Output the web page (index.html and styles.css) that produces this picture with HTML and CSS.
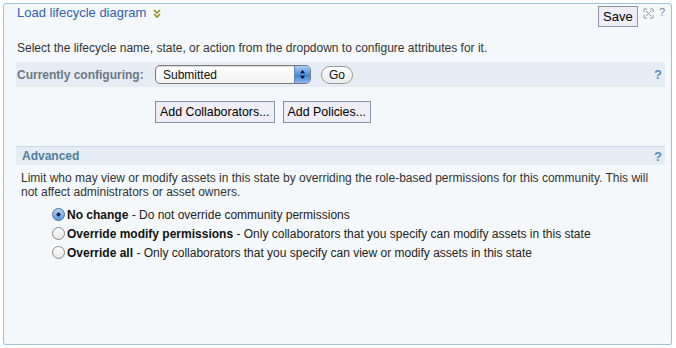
FILE: index.html
```html
<!DOCTYPE html>
<html>
<head>
<meta charset="utf-8">
<link rel="stylesheet" href="styles.css">
</head>
<body>
<div class="panel">
  <div class="header">
    <a class="title">Load lifecycle diagram</a>
    <svg class="chev" width="8" height="10" viewBox="0 0 8 10"><path d="M1 1 L4 4 L7 1 M1 5 L4 8 L7 5" fill="none" stroke="#8f8f1e" stroke-width="1.6"/></svg>
    <span class="spacer"></span>
    <button class="save">Save</button>
    <svg class="xicon" width="11" height="11" viewBox="0 0 11 11"><path d="M1 1 L4 1 M1 1 L1 4 M10 1 L7 1 M10 1 L10 4 M1 10 L4 10 M1 10 L1 7 M10 10 L7 10 M10 10 L10 7 M3 3 L8 8 M8 3 L3 8" fill="none" stroke="#8a8a8a" stroke-width="0.9"/></svg>
    <span class="qicon">?</span>
  </div>
  <p class="desc">Select the lifecycle name, state, or action from the dropdown to configure attributes for it.</p>
  <div class="bar config">
    <span class="label">Currently configuring:</span>
    <div class="select">
      <span class="seltext">Submitted</span>
      <span class="arrows"><svg width="7" height="11" viewBox="0 0 7 11"><path d="M3.5 1 L6 4.2 L1 4.2 Z M3.5 10 L6 6.8 L1 6.8 Z" fill="#111"/></svg></span>
    </div>
    <button class="go">Go</button>
    <span class="spacer"></span>
    <span class="help">?</span>
  </div>
  <div class="actions">
    <button class="btn">Add Collaborators...</button>
    <button class="btn">Add Policies...</button>
  </div>
  <div class="bar adv">
    <span class="advlabel">Advanced</span>
    <span class="spacer"></span>
    <span class="help">?</span>
  </div>
  <p class="para">Limit who may view or modify assets in this state by overriding the role-based permissions for this community. This will not affect administrators or asset owners.</p>
  <div class="radios">
    <div class="radio"><span class="circle on"></span><b>No change</b>&nbsp;- Do not override community permissions</div>
    <div class="radio"><span class="circle"></span><b>Override modify permissions</b>&nbsp;- Only collaborators that you specify can modify assets in this state</div>
    <div class="radio"><span class="circle"></span><b>Override all</b>&nbsp;- Only collaborators that you specify can view or modify assets in this state</div>
  </div>
</div>
</body>
</html>
```

FILE: styles.css
```css
html, body {
  margin: 0;
  padding: 0;
  background: #ffffff;
}
body {
  padding: 3px 0 0 3px;
  font-family: "Liberation Sans", Arial, sans-serif;
  font-size: 12px;
  color: #333333;
}
.panel {
  width: 667px;
  height: 340px;
  border: 1px solid #9cc2d7;
  border-radius: 3px;
  background: #f5f8fa;
  box-shadow: 0 1px 0 #cfe0ea;
  display: flex;
  flex-direction: column;
}
.header {
  display: flex;
  align-items: flex-start;
  height: 24px;
  padding: 0 6px 0 13px;
}
.title {
  font-size: 13px;
  line-height: 16px;
  color: #2f63b3;
  margin-top: 1px;
}
.chev {
  margin: 5px 0 0 7px;
}
.spacer {
  flex: 1;
}
.save {
  font-family: "Liberation Sans", Arial, sans-serif;
  font-size: 13px;
  height: 21px;
  width: 40px;
  padding: 0;
  margin-top: 2px;
  border: 1px solid #8c98a6;
  background: #eeedf6;
  color: #000;
}
.xicon {
  margin: 4px 0 0 5px;
}
.qicon {
  font-size: 11px;
  color: #8a8a8a;
  margin: 2px 0 0 5px;
  line-height: 12px;
}
.desc {
  margin: 13px 0 0 13px;
  line-height: 14px;
}
.bar {
  display: flex;
  align-items: center;
  margin: 0 6px 0 12px;
  background: #e5ecf3;
}
.config {
  margin-top: 7px;
  height: 25px;
  padding-left: 1px;
}
.label {
  font-weight: bold;
  color: #6c7986;
  width: 138px;
}
.select {
  display: flex;
  align-items: center;
  width: 154px;
  height: 17px;
  border: 1px solid #7c7c7c;
  border-radius: 5px;
  background: linear-gradient(#ffffff, #f2f2f2);
  overflow: hidden;
  box-shadow: inset 0 1px 1px rgba(0,0,0,0.15);
}
.seltext {
  flex: 1;
  padding-left: 7px;
  font-size: 12px;
  color: #111;
}
.arrows {
  width: 15px;
  height: 17px;
  display: flex;
  align-items: center;
  justify-content: center;
  background: linear-gradient(#a9cbf3, #4f8ee0 50%, #3b7fd8 51%, #8ab8ee);
  border-left: 1px solid #5b86b8;
}
.go {
  margin-left: 10px;
  height: 18px;
  width: 32px;
  padding: 0;
  border: 1px solid #9a9a9a;
  border-radius: 9px;
  background: linear-gradient(#ffffff, #ececec);
  font-family: "Liberation Sans", Arial, sans-serif;
  font-size: 12px;
  color: #111;
}
.help {
  font-weight: bold;
  font-size: 13px;
  color: #5b8db5;
  margin-right: 3px;
}
.actions {
  display: flex;
  gap: 8px;
  margin: 14px 0 0 151px;
}
.btn {
  font-family: "Liberation Sans", Arial, sans-serif;
  font-size: 12.4px;
  height: 22px;
  padding: 0 4px;
  border: 1px solid #8494a4;
  background: #efeef7;
  color: #000;
}
.adv {
  margin-top: 23px;
  height: 18px;
  border-top: 1px solid #c3dbe8;
  padding-left: 6px;
}
.advlabel {
  font-weight: bold;
  color: #4e7f9e;
}
.para {
  margin: 6px 12px 0 17px;
  line-height: 14px;
}
.radios {
  margin: 6px 0 0 48px;
  display: flex;
  flex-direction: column;
}
.radio {
  display: flex;
  align-items: center;
  height: 19px;
  color: #222;
}
.radio b {
  color: #111;
}
.circle {
  width: 13px;
  height: 13px;
  border: 1px solid #8a8a8a;
  border-radius: 50%;
  background: linear-gradient(#ffffff, #e6e6e6);
  margin-right: 2px;
  box-sizing: border-box;
  flex: none;
}
.circle.on {
  border-color: #4a6f9a;
  background: radial-gradient(circle, #1a2a40 0 1.8px, transparent 2.3px), linear-gradient(#b6d4f5, #5d98e0);
}
```
